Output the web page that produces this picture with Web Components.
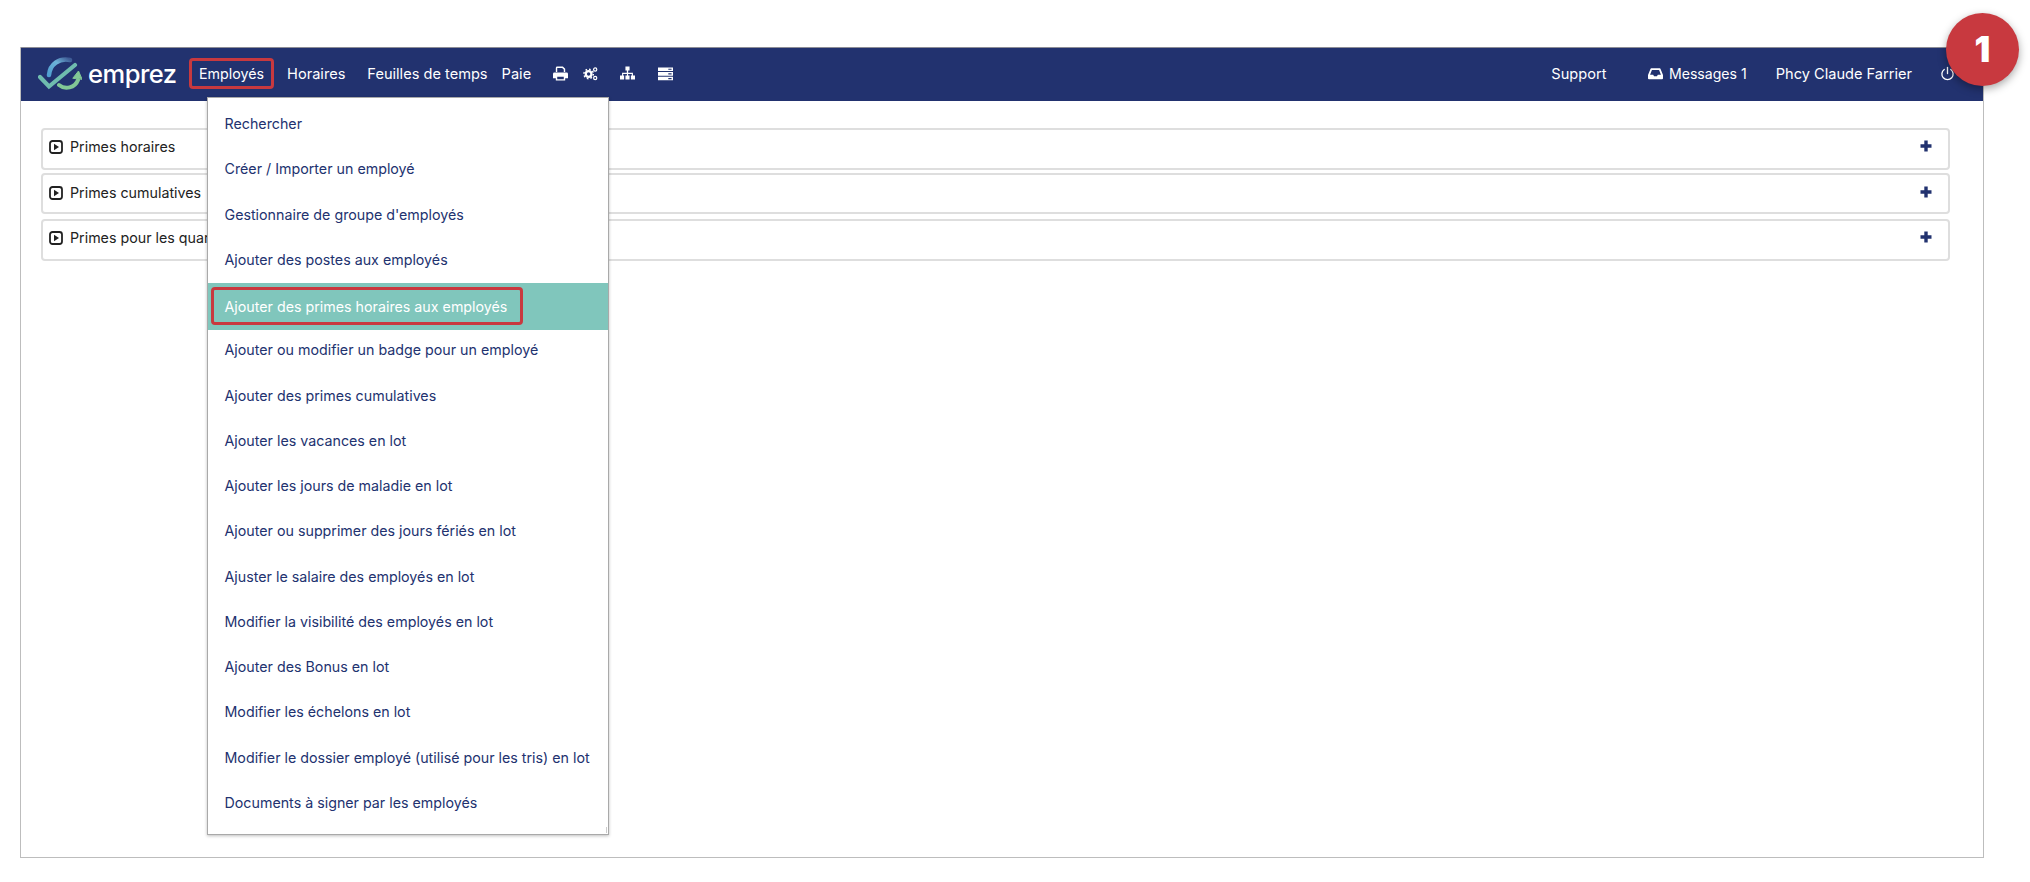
<!DOCTYPE html>
<html lang="fr"><head><meta charset="utf-8"><title>Emprez</title>
<style>
html,body{margin:0;background:#fff}
body{font:14.25px Inter,"Liberation Sans",sans-serif;color:#22326f;padding:47px 46px 0 20px;box-sizing:border-box;height:882px;overflow:hidden;position:relative}
</style></head><body>
<app-frame>
<app-nav>
  <emprez-logo slot="logo"></emprez-logo>
  <nav-link slot="left" boxed>Employés</nav-link>
  <nav-link slot="left" style="margin-left:13px">Horaires</nav-link>
  <nav-link slot="left" style="margin-left:22px">Feuilles de temps</nav-link>
  <nav-link slot="left" style="margin-left:14px">Paie</nav-link>
  <nav-icon slot="left" name="print" style="margin-left:22px"></nav-icon>
  <nav-icon slot="left" name="gears" style="margin-left:15px"></nav-icon>
  <nav-icon slot="left" name="sitemap" style="margin-left:22px"></nav-icon>
  <nav-icon slot="left" name="server" style="margin-left:23px"></nav-icon>
  <nav-link slot="right">Support</nav-link>
  <nav-icon slot="right" name="inbox" style="margin-left:41.500px"></nav-icon>
  <nav-link slot="right" style="margin-left:6px;font-size:14.1px">Messages 1</nav-link>
  <nav-link slot="right" style="margin-left:29px">Phcy Claude Farrier</nav-link>
  <nav-icon slot="right" name="power" style="margin-left:28px"></nav-icon>
</app-nav>
<main-panel>
  <accordion-row style="height:42px">Primes horaires</accordion-row>
  <accordion-row style="height:41px;margin-top:3px;padding-top:8px">Primes cumulatives</accordion-row>
  <accordion-row style="height:42px;margin-top:5px">Primes pour les quarts</accordion-row>
</main-panel>
<drop-menu>
  <menu-item>Rechercher</menu-item>
  <menu-item>Créer / Importer un employé</menu-item>
  <menu-item>Gestionnaire de groupe d'employés</menu-item>
  <menu-item>Ajouter des postes aux employés</menu-item>
  <menu-item active>Ajouter des primes horaires aux employés</menu-item>
  <menu-item>Ajouter ou modifier un badge pour un employé</menu-item>
  <menu-item>Ajouter des primes cumulatives</menu-item>
  <menu-item>Ajouter les vacances en lot</menu-item>
  <menu-item>Ajouter les jours de maladie en lot</menu-item>
  <menu-item>Ajouter ou supprimer des jours fériés en lot</menu-item>
  <menu-item>Ajuster le salaire des employés en lot</menu-item>
  <menu-item>Modifier la visibilité des employés en lot</menu-item>
  <menu-item>Ajouter des Bonus en lot</menu-item>
  <menu-item>Modifier les échelons en lot</menu-item>
  <menu-item>Modifier le dossier employé (utilisé pour les tris) en lot</menu-item>
  <menu-item>Documents à signer par les employés</menu-item>
</drop-menu>
</app-frame>
<step-badge>1</step-badge>
<script>
function def(name,html){
  customElements.define(name,class extends HTMLElement{
    constructor(){super();this.attachShadow({mode:'open'}).innerHTML=typeof html==='function'?html(this):html;}
  });
}
def('app-frame',`<style>:host{display:flex;flex-direction:column;height:811px;border:1px solid #bdbdbd;border-top:0;box-sizing:border-box;position:relative;background:#fff}</style><slot></slot>`);
def('app-nav',`<style>:host{display:flex;align-items:center;height:54px;flex:none;background:#22326f;color:#fff;padding:0 28px 2px 17px;border-top:1px solid #8d8d96;box-sizing:border-box}
.l,.r{display:flex;align-items:center}.l{margin-left:9px}.r{margin-left:auto}</style><slot name="logo"></slot><div class="l"><slot name="left"></slot></div><div class="r"><slot name="right"></slot></div>`);
def('emprez-logo',`<style>:host{display:flex;align-items:center;width:142px;height:52px;color:#fff}
svg{display:block;flex:none}span{font:500 25.5px/1 Inter,sans-serif;margin-left:6px;letter-spacing:-.5px;position:relative;top:0}</style>
<svg width="44" height="34" viewBox="0 0 44 34" fill="none" stroke-linecap="round">
<defs><linearGradient id="b" x1="0" y1="1" x2="1" y2="0"><stop offset="0" stop-color="#4f9fd0"/><stop offset=".6" stop-color="#6db3d8"/><stop offset="1" stop-color="#3f5c96"/></linearGradient></defs>
<path d="M11 18C12 7 21 1 32 3" stroke="url(#b)" stroke-width="4.500"/>
<path d="M2 20l9 9.500L37 8" stroke="#6fbcae" stroke-width="4.200"/>
<path d="M21 28c6 5 16 3 19-5" stroke="#82c796" stroke-width="4"/>
<path d="M35 21l5.500-7 3.500 8z" fill="#82c796" stroke="#82c796" stroke-width="1"/>
</svg><span>emprez</span>`);
def('nav-link',`<style>:host{display:inline-flex;align-items:center;height:31px;font-size:14.6px;color:#fff;white-space:nowrap;box-sizing:border-box}
:host([boxed]){border:3px solid #c8393f;border-radius:4px;padding:0 7px;font-size:14.25px}</style><slot></slot>`);
const icons={
print:'<path fill="#fff" d="M3 6V1.500A1.500 1.500 0 0 1 4.500 0h6L13 2.500V6h-1.500V3.200L9.800 1.500H4.500V6zM1.500 6.500h13A1.500 1.500 0 0 1 16 8v4.500h-3V15H3v-2.500H0V8a1.500 1.500 0 0 1 1.500-1.500zM4.500 11v2.500h7V11z"/>',
gears:'<g fill="none" stroke="#fff"><circle cx="6" cy="8" r="3" stroke-width="2.400"/><circle cx="6" cy="8" r="5" stroke-width="1.600" stroke-dasharray="1.800 2.100"/><circle cx="13" cy="3.200" r="1.700" stroke-width="1.300"/><circle cx="13" cy="12.300" r="1.700" stroke-width="1.300"/></g>',
sitemap:'<path fill="#fff" d="M5.800 0h4.400v4.400H8.700v2.400h5.100v2.800H16V14h-4.400V9.600h1V8H8.600v1.600h1.600V14H5.800V9.600h1.600V8H3.400v1.600h1V14H0V9.600h2.200V6.800h5.100V4.400H5.800z"/>',
server:'<path fill="#fff" fill-rule="evenodd" d="M0 1h16v3.800H0zM11 2.300v1.200h3.500V2.300zM0 6h16v3.800H0zM11 7.300v1.200h3.500V7.300zM0 11h16v3.800H0zM11 12.300v1.200h3.500v-1.200z"/>',
inbox:'<path fill="#fff" fill-rule="evenodd" d="M3.500 2h9a1 1 0 0 1 .9.600L16 9v3.500a1 1 0 0 1-1 1H1a1 1 0 0 1-1-1V9l2.600-6.400a1 1 0 0 1 .9-.6zM4.200 3.800 2.200 8.700h3.300l1 1.800h3l1-1.800h3.300l-2-4.900z"/>',
power:'<g fill="none" stroke="#fff" stroke-width="1.400" stroke-linecap="round"><path d="M8 1v6.500"/><path d="M4.500 3.200a6 6 0 1 0 7 0"/></g>'};
def('nav-icon',h=>`<style>:host{display:inline-flex;align-items:center}svg{display:block}</style><svg width="15" height="15" viewBox="0 0 16 15">${icons[h.getAttribute('name')]}</svg>`);
def('main-panel',`<style>:host{display:block;padding:27px 33px 0 20px;flex:1}</style><slot></slot>`);
def('accordion-row',`<style>:host{display:flex;align-items:flex-start;box-sizing:border-box;border:2px solid #dedede;border-radius:4px;color:#222;padding:7px 16px 0 6px;background:#fff;line-height:20px}
svg{flex:none;margin:3px 7px 0 0}</style>
<svg width="14" height="14" viewBox="0 0 14 14"><rect x="1" y="1" width="12" height="12" rx="2.500" fill="none" stroke="#222" stroke-width="1.800"/><path d="M5 3.800v6.400L10 7z" fill="#222"/></svg><span><slot></slot></span>
<svg width="12" height="12" viewBox="0 0 12 12" style="margin:3px 0 0 auto"><path d="M6 .5v11M.5 6h11" stroke="#22326f" stroke-width="3.400"/></svg>`);
def('drop-menu',`<style>:host{position:absolute;left:186px;top:50px;width:402px;height:738px;box-sizing:border-box;background:#fff;border:1px solid #a9a9a9;box-shadow:0 1px 3px rgba(0,0,0,.25);padding:3px 0 0;display:block}
.g{position:absolute;right:1px;bottom:1px;width:4px;height:6px;border-right:1px solid #ccc}</style><slot></slot><div class="g"></div>`);
def('menu-item',`<style>:host{display:flex;align-items:center;height:45.25px;padding-left:16.500px;color:#22326f;white-space:nowrap;position:relative}
:host([active]){background:#80c6bc;color:#fff;height:47px;margin:1px 0 -2.750px;padding-bottom:1px;box-sizing:border-box}
:host([active])::before{content:"";position:absolute;left:3px;top:4px;width:312px;height:38px;box-sizing:border-box;border:3px solid #c8393f;border-radius:4px}</style><slot></slot>`);
def('step-badge',`<style>:host{position:absolute;left:1946px;top:13px;width:73px;height:73px;border-radius:50%;background:#c8393f;color:#fff;display:flex;align-items:center;justify-content:center;font:900 35px/1 Inter,sans-serif;box-shadow:0 3px 8px rgba(0,0,0,.35)}</style><slot></slot>`);
</script>
</body></html>
